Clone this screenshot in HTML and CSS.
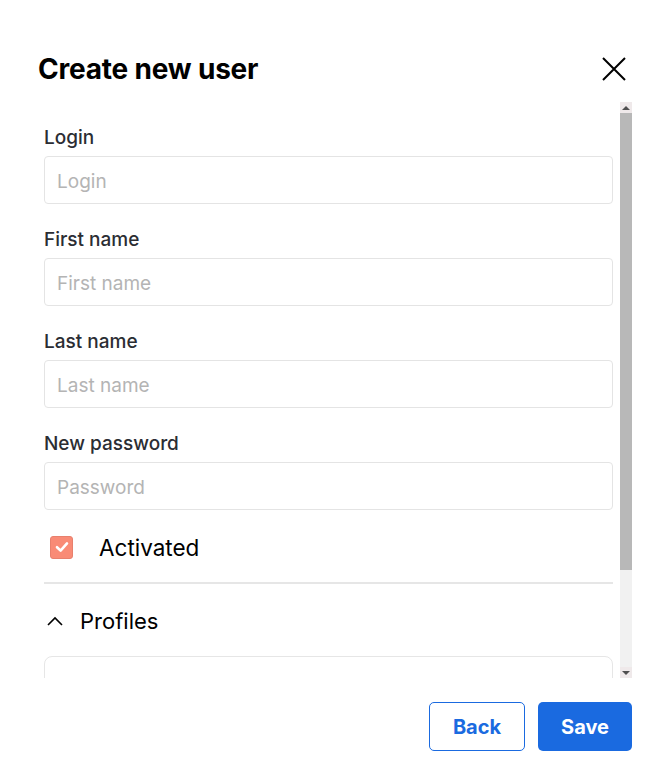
FILE: index.html
```html
<!DOCTYPE html>
<html lang="en">
<head>
    <meta charset="UTF-8">
    <meta name="viewport" content="width=device-width, initial-scale=1.0">
    <title>Create new user</title>
    <link rel="stylesheet" href="styles.css">
</head>
<body>
    <div class="dialog">
        <header class="dialog-header">
            <h1>Create new user</h1>
            <button class="close" aria-label="Close">
                <svg width="24" height="24" viewBox="0 0 24 24">
                    <path d="M1 1 L23 23 M23 1 L1 23" stroke="#000" stroke-width="2" fill="none"/>
                </svg>
            </button>
        </header>

        <div class="body">
            <div class="scroll">
                <div class="field">
                    <label>Login</label>
                    <input type="text" placeholder="Login">
                </div>
                <div class="field">
                    <label>First name</label>
                    <input type="text" placeholder="First name">
                </div>
                <div class="field">
                    <label>Last name</label>
                    <input type="text" placeholder="Last name">
                </div>
                <div class="field">
                    <label>New password</label>
                    <input type="password" placeholder="Password">
                </div>

                <!-- Activated -->
                <div class="check-row">
                    <span class="checkbox">
                        <svg width="14" height="14" viewBox="0 0 14 14">
                            <path d="M2 7.2 L5.6 10.6 L12 3.4" stroke="#fff" stroke-width="2.6" fill="none" stroke-linecap="round" stroke-linejoin="round"/>
                        </svg>
                    </span>
                    <span>Activated</span>
                </div>

                <hr class="divider">

                <!-- Profiles -->
                <div class="section-toggle">
                    <svg width="16" height="10" viewBox="0 0 16 10">
                        <path d="M1 9 L8 2 L15 9" stroke="#000" stroke-width="1.6" fill="none"/>
                    </svg>
                    <span>Profiles</span>
                </div>
                <div class="profiles-box"></div>
            </div>

            <div class="scrollbar">
                <div class="sb-btn"><span class="arrow-up"></span></div>
                <div class="sb-track"><div class="sb-thumb"></div></div>
                <div class="sb-btn"><span class="arrow-down"></span></div>
            </div>
        </div>

        <footer class="actions">
            <button class="btn btn-outline">Back</button>
            <button class="btn btn-primary">Save</button>
        </footer>
    </div>
</body>
</html>
```

FILE: styles.css
```css
/* General Styles */
body {
    font-family: Inter, "Open Sans", sans-serif;
    margin: 0;
    padding: 0;
    background-color: #fff;
    color: #000;
}
.dialog {
    width: 672px;
    height: 782px;
    padding-top: 51px;
    box-sizing: border-box;
}
.dialog-header {
    display: flex;
    align-items: center;
    justify-content: space-between;
    height: 36px;
    padding: 0 46px 0 38px;
}
.dialog-header h1 {
    margin: 0;
    font-size: 28px;
    font-weight: 700;
    letter-spacing: -0.2px;
}
.close {
    background: none;
    border: none;
    padding: 0;
    width: 24px;
    height: 24px;
    cursor: pointer;
}

/* Scroll body */
.body {
    display: flex;
    height: 576px;
    margin: 15px 40px 0 44px;
}
.scroll {
    flex: 1;
    overflow: hidden;
    padding-right: 7px;
    padding-top: 24px;
}
.field {
    margin-bottom: 24px;
}
.field label {
    display: block;
    font-size: 19px;
    line-height: 24px;
    font-weight: 500;
    color: #2b2d33;
    margin-bottom: 6px;
}
.field input {
    width: 100%;
    height: 48px;
    box-sizing: border-box;
    border: 1px solid #e4e4e4;
    border-radius: 4px;
    padding: 2px 12px 0;
    font-family: inherit;
    font-size: 19px;
    color: #333;
}
.field input::placeholder {
    color: #b4b4b4;
}
.check-row {
    display: flex;
    align-items: center;
    height: 26px;
    font-size: 22.5px;
    padding-left: 6px;
}
.checkbox {
    width: 23px;
    height: 23px;
    box-sizing: border-box;
    background: #f98b76;
    border: 1px solid #e8806d;
    border-radius: 3px;
    display: flex;
    align-items: center;
    justify-content: center;
    margin-right: 26px;
}
.divider {
    border: none;
    height: 2px;
    background: #e6e6e6;
    margin: 22px 0 0;
}
.section-toggle {
    display: flex;
    align-items: center;
    height: 30px;
    margin-top: 22px;
    font-size: 22px;
    padding-left: 3px;
}
.section-toggle svg {
    margin-right: 17px;
}
.profiles-box {
    margin-top: 20px;
    height: 120px;
    border: 1px solid #e6e6e6;
    border-radius: 8px;
}

/* Scrollbar */
.scrollbar {
    width: 12px;
    display: flex;
    flex-direction: column;
    background: #f1f1f1;
}
.sb-btn {
    height: 11px;
    display: flex;
    align-items: center;
    justify-content: center;
    background: #efe9ea;
}
.arrow-up {
    border-left: 4px solid transparent;
    border-right: 4px solid transparent;
    border-bottom: 4px solid #505050;
}
.arrow-down {
    border-left: 4px solid transparent;
    border-right: 4px solid transparent;
    border-top: 4px solid #505050;
}
.sb-track {
    flex: 1;
}
.sb-thumb {
    height: 457px;
    background: #b8b8b8;
}

/* Footer buttons */
.actions {
    display: flex;
    justify-content: flex-end;
    gap: 13px;
    margin: 24px 40px 0 0;
}
.btn {
    height: 49px;
    border-radius: 5px;
    font-family: inherit;
    font-size: 20px;
    font-weight: 700;
    cursor: pointer;
}
.btn-outline {
    width: 96px;
    background: #fff;
    color: #1a6ae0;
    border: 1px solid #1a6ae0;
}
.btn-primary {
    width: 94px;
    background: #1a6ae0;
    color: #fff;
    border: none;
}
```
